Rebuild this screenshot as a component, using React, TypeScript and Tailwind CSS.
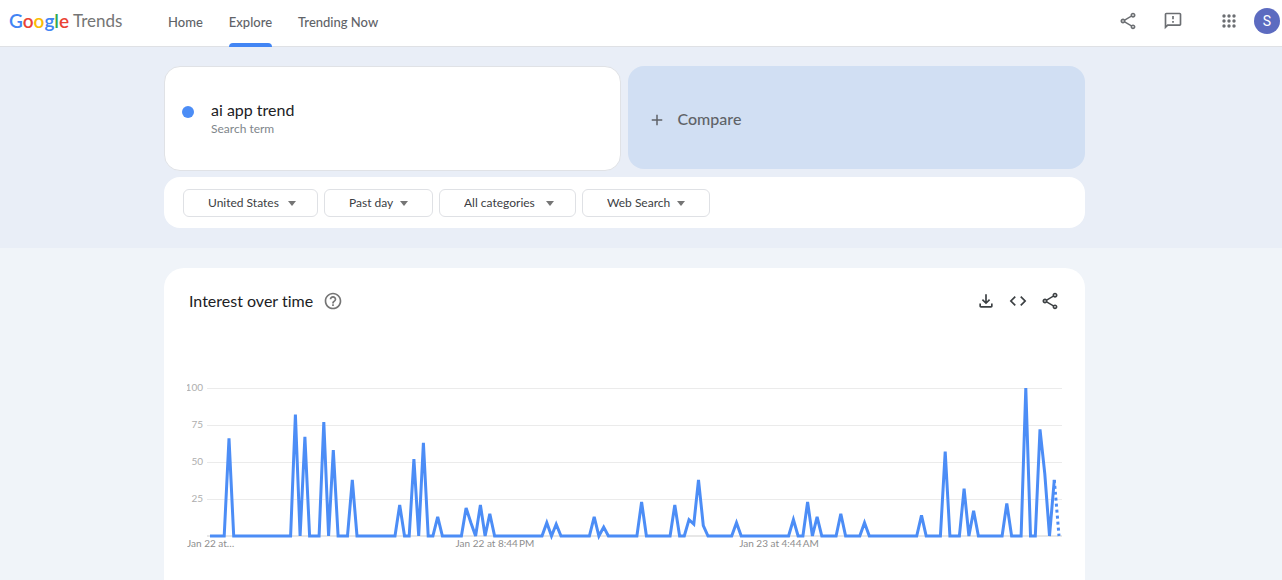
import clsx from "clsx";
import {
    MdAdd,
    MdCode,
    MdHelpOutline,
    MdOutlineFeedback,
    MdOutlineFileDownload,
    MdOutlineShare,
} from "react-icons/md";

const LOGO = [
    { letter: "G", color: "text-[#4285f4]" },
    { letter: "o", color: "text-[#ea4335]" },
    { letter: "o", color: "text-[#fbbc04]" },
    { letter: "g", color: "text-[#4285f4]" },
    { letter: "l", color: "text-[#34a853]" },
    { letter: "e", color: "text-[#ea4335]" },
];

const NAV = [
    { label: "Home", active: false },
    { label: "Explore", active: true },
    { label: "Trending Now", active: false },
];

const FILTERS = [
    { name: "Region", value: "United States", width: "w-[135px]", caret: "right-[22px]" },
    { name: "Time range", value: "Past day", width: "w-[109px]", caret: "right-[25px]" },
    { name: "Category", value: "All categories", width: "w-[137px]", caret: "right-[22px]" },
    { name: "Search type", value: "Web Search", width: "w-[128px]", caret: "right-[25px]" },
];

// One sample every 8 minutes over a day; samples that are not listed are 0
const SAMPLES = 180;
const VALUES: Record<number, number> = {
    4: 66, 18: 82, 20: 67, 24: 77, 26: 58, 30: 38, 40: 21, 43: 52, 45: 63, 48: 13,
    54: 19, 55: 9, 57: 21, 59: 15, 71: 9, 73: 8, 81: 13, 83: 6, 91: 23, 98: 21,
    101: 11, 102: 8, 103: 38, 104: 7, 111: 9, 123: 11, 126: 23, 128: 13, 133: 15,
    138: 9, 150: 14, 155: 57, 159: 32, 161: 17, 168: 22, 172: 100, 175: 72, 176: 42, 178: 38,
};

const PLOT = { left: 23, right: 872, top: 8, bottom: 156 };

function toPoint(i: number) {
    const x = PLOT.left + (i * (PLOT.right - PLOT.left)) / (SAMPLES - 1);
    const y = PLOT.bottom - ((VALUES[i] ?? 0) * (PLOT.bottom - PLOT.top)) / 100;
    return `${x.toFixed(1)},${y.toFixed(1)}`;
}

function Header() {
    return (
        <header className="flex h-[47px] items-stretch border-b border-[#dfe1e5] bg-white">
            <a href="#" className="flex w-[158px] items-center gap-1 pb-1 pl-[9px] text-[17px] text-[#757575]">
                <span className="text-[19px] font-semibold">
                    {LOGO.map((l, i) => (
                        <span key={i} className={l.color}>
                            {l.letter}
                        </span>
                    ))}
                </span>
                Trends
            </a>

            <nav className="-mb-px flex gap-[26px] pl-[10px] text-[13px] font-medium text-[#5f6368]">
                {NAV.map((item) => (
                    <a key={item.label} href="#" className="flex flex-col justify-between whitespace-nowrap">
                        <span className="pt-3 leading-5">{item.label}</span>
                        <span className={clsx("h-1 rounded-t", item.active && "bg-[#4285f4]")} />
                    </a>
                ))}
            </nav>

            <div className="ml-auto flex items-center pr-[2px] pb-1 text-[#6b6e72]">
                <button aria-label="Share" className="mr-[25px]">
                    <MdOutlineShare size={20} />
                </button>
                <button aria-label="Send feedback" className="mr-[36px]">
                    <MdOutlineFeedback size={20} />
                </button>
                <button aria-label="Google apps" className="mr-[15px]">
                    <svg width="20" height="20" viewBox="0 0 20 20" fill="currentColor">
                        {[5, 10, 15].map((y) =>
                            [5, 10, 15].map((x) => <circle key={`${x}-${y}`} cx={x} cy={y} r="1.7" />)
                        )}
                    </svg>
                </button>
                <button
                    aria-label="Account"
                    className="flex h-[26px] w-[26px] items-center justify-center rounded-full bg-[#5c6bc0] font-['Roboto','Liberation_Sans',sans-serif] text-sm text-white"
                >
                    S
                </button>
            </div>
        </header>
    );
}

function SearchBand() {
    return (
        <section className="bg-[#e9eef7] pt-[19px] pr-[197px] pb-5 pl-[164px]">
            <div className="flex items-start gap-[7px]">
                <div className="flex h-[105px] flex-1 items-center rounded-2xl border border-[#e0e2e6] bg-white pl-[17px]">
                    <span className="mb-[14px] h-3 w-3 rounded-full bg-[#4c8df6]" />
                    <div className="pl-[17px]">
                        <div className="text-base leading-5 text-[#202124]">ai app trend</div>
                        <div className="text-xs leading-[18px] text-[#80868b]">Search term</div>
                    </div>
                </div>
                <button className="flex h-[103px] flex-1 items-center rounded-2xl bg-[#d1dff3] pb-1 pl-5 pt-2 text-base text-[#5f6368]">
                    <MdAdd size={18} />
                    <span className="pb-px pl-3 font-medium">Compare</span>
                </button>
            </div>

            <div className="mt-[6px] flex h-[51px] items-center gap-[6px] rounded-2xl bg-white px-[19px]">
                {FILTERS.map((f) => (
                    <div key={f.name} className={clsx("relative", f.width)}>
                        <select
                            aria-label={f.name}
                            className="h-7 w-full appearance-none rounded-md border border-[#dfe1e5] bg-white pl-6 text-xs text-[#3c4043]"
                        >
                            <option>{f.value}</option>
                        </select>
                        <span
                            className={clsx(
                                "pointer-events-none absolute top-3 border-x-4 border-t-5 border-x-transparent border-t-[#757575]",
                                f.caret
                            )}
                        />
                    </div>
                ))}
            </div>
        </section>
    );
}

function Chart() {
    const solid = Array.from({ length: SAMPLES - 1 }, (_, i) => toPoint(i)).join(" ");
    const partial = [SAMPLES - 2, SAMPLES - 1].map(toPoint).join(" ");

    return (
        <svg viewBox="0 0 875 172" className="w-full" role="img" aria-label="Interest over time">
            {[100, 75, 50, 25].map((v) => {
                const y = PLOT.bottom - (v * (PLOT.bottom - PLOT.top)) / 100;
                return (
                    <g key={v}>
                        <line x1="20" x2="875" y1={y + 0.5} y2={y + 0.5} stroke="#ebebeb" />
                        <text x="16" y={y + 3} textAnchor="end" fontSize="10" fill="#aeaeae">
                            {v}
                        </text>
                    </g>
                );
            })}
            <line x1="20" x2="875" y1="156" y2="156" stroke="#cfcfcf" />
            <polyline points={solid} fill="none" stroke="#4c8df6" strokeWidth="3" />
            <polyline points={partial} fill="none" stroke="#4c8df6" strokeWidth="3" strokeDasharray="3 3" />
            <g fontSize="10" fill="#8e8e8e">
                <text x="0" y="167">Jan 22 at…</text>
                <text x="308" y="167" textAnchor="middle">{"Jan 22 at 8:44\u2009PM"}</text>
                <text x="592" y="167" textAnchor="middle">{"Jan 23 at 4:44\u2009AM"}</text>
            </g>
        </svg>
    );
}

export default function App() {
    return (
        <div className="flex min-h-screen flex-col bg-[#f0f4f9] font-['Lato','Liberation_Sans',sans-serif] [font-variant-ligatures:none]">
            <Header />
            <SearchBand />
            <main className="flex flex-1 pt-5 pr-[197px] pl-[164px]">
                <section className="w-full rounded-t-[20px] bg-white px-[23px] pt-[23px]">
                    <div className="flex h-5 items-center pr-[2px] pl-[2px] text-[#3c4043]">
                        <h2 className="text-base text-[#202124]">Interest over time</h2>
                        <button aria-label="Help" className="ml-[10px] text-[#757575]">
                            <MdHelpOutline size={20} />
                        </button>
                        <div className="ml-auto flex gap-3">
                            <button aria-label="Download CSV">
                                <MdOutlineFileDownload size={20} />
                            </button>
                            <button aria-label="Embed">
                                <MdCode size={20} />
                            </button>
                            <button aria-label="Share chart">
                                <MdOutlineShare size={20} />
                            </button>
                        </div>
                    </div>
                    <div className="pt-[69px]">
                        <Chart />
                    </div>
                </section>
            </main>
        </div>
    );
}
